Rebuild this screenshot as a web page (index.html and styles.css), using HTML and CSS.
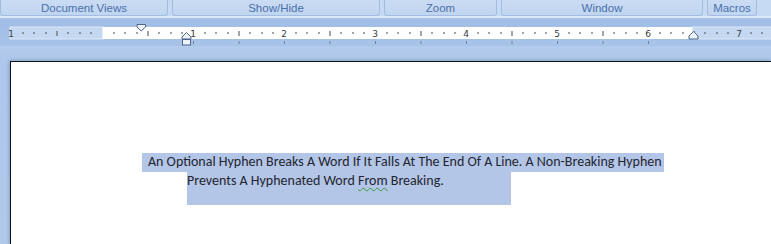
FILE: index.html
```html
<!DOCTYPE html>
<html lang="en">

<head>
    <meta charset="UTF-8">
    <title>Document - Hyphens</title>
    <link rel="stylesheet" href="styles.css">
</head>

<body>
    <div class="ribbon">
        <div class="group g-views">Document Views</div>
        <div class="group g-show">Show/Hide</div>
        <div class="group g-zoom">Zoom</div>
        <div class="group g-window">Window</div>
        <div class="group g-macros">Macros</div>
    </div>

    <!-- ruler: zero at x=102.5, one inch = 91px -->
    <div class="ruler-bar">
        <svg class="ruler" width="771" height="26" viewBox="0 0 771 26">
            <defs>
                <pattern id="ticks" patternUnits="userSpaceOnUse" x="102.5" y="0" width="91" height="26">
                    <rect x="11" y="12" width="1" height="2" fill="#4a4a4a" />
                    <rect x="22" y="12" width="1" height="2" fill="#4a4a4a" />
                    <rect x="34" y="12" width="1" height="2" fill="#4a4a4a" />
                    <rect x="45" y="11" width="1" height="5" fill="#4a4a4a" />
                    <rect x="56" y="12" width="1" height="2" fill="#4a4a4a" />
                    <rect x="68" y="12" width="1" height="2" fill="#4a4a4a" />
                    <rect x="79" y="12" width="1" height="2" fill="#4a4a4a" />
                </pattern>
                <pattern id="tabs" patternUnits="userSpaceOnUse" x="102" y="0" width="45.5" height="26">
                    <rect x="0" y="21" width="1" height="3" fill="#6f7f98" />
                </pattern>
            </defs>

            <rect class="strip-off" x="10" y="7" width="93" height="12" />
            <rect class="strip-on" x="102.5" y="7" width="590" height="12" />
            <rect class="strip-off" x="692.5" y="7" width="80" height="12" />

            <rect x="12" y="0" width="759" height="26" fill="url(#ticks)" />
            <rect x="190" y="0" width="462" height="26" fill="url(#tabs)" />

            <g class="nums">
                <text x="11" y="16.5">1</text>
                <text x="193" y="16.5">1</text>
                <text x="284" y="16.5">2</text>
                <text x="375" y="16.5">3</text>
                <text x="466" y="16.5">4</text>
                <text x="557" y="16.5">5</text>
                <text x="648" y="16.5">6</text>
                <text x="739" y="16.5">7</text>
            </g>

            <g class="marker">
                <path d="M137 4.5 H145.5 V7 L141.2 11 L137 7 Z" />
                <path d="M186.5 12.5 L191 17 V19 H182 V17 Z" />
                <rect x="182.5" y="19.5" width="8" height="5.5" />
                <path d="M693.5 11.5 L698 16 V19 H689 V16 Z" />
            </g>
        </svg>
    </div>

    <div class="workspace">
        <div class="page">
            <p class="para">
                <span class="line first">An Optional Hyphen Breaks A Word If It Falls At The End Of A Line. A Non-Breaking Hyphen</span>
                <span class="line second">Prevents A Hyphenated Word <span class="grammar">From</span> Breaking.</span>
            </p>
        </div>
    </div>
</body>

</html>
```

FILE: styles.css
```css
body {
    margin: 0;
    width: 771px;
    height: 244px;
    overflow: hidden;
    background-color: #b1c9eb;
    font-family: 'Liberation Sans', Arial, sans-serif;
}

/* 功能区分组标题 */
.ribbon {
    display: flex;
    gap: 4px;
    height: 16px;
    background-color: #c6daf3;
    border-bottom: 2px solid #dce8f7;
}

.group {
    box-sizing: border-box;
    height: 16px;
    border: 1px solid #a3bde2;
    border-top: none;
    border-radius: 0 0 3px 3px;
    background: linear-gradient(#cadcf3, #c0d5f0);
    color: #4a70ab;
    font-size: 11.5px;
    line-height: 17px;
    text-align: center;
}

.g-views { width: 168px; }
.g-show { width: 208px; }
.g-zoom { width: 113px; }
.g-window { width: 202px; }
.g-macros { width: 50px; }

/* 标尺 */
.ruler-bar {
    height: 26px;
    background: linear-gradient(#a0bde6, #a7c3e9);
    border-top: 2px solid #a6c1e7;
}

.ruler {
    display: block;
}

.strip-on {
    fill: #ffffff;
}

.strip-off {
    fill: #c5d8f1;
    stroke: #dde8f7;
    stroke-width: 1;
}

.nums text {
    font-family: 'DejaVu Sans', sans-serif;
    font-size: 9px;
    fill: #3c3c3c;
    text-anchor: middle;
}

.marker path,
.marker rect {
    fill: #eef3fa;
    stroke: #4d6588;
    stroke-width: 1;
}

/* 文档区域 */
.workspace {
    box-sizing: border-box;
    height: 198px;
    padding: 15px 0 0 10px;
    background: linear-gradient(#b3cbec, #adc6ea 20px, #b1c9eb);
}

.page {
    height: 100%;
    background: white;
    border-top: 1px solid #111;
    border-left: 1px solid #111;
    box-shadow: -1px -1px 3px rgba(60, 90, 140, 0.35);
}

.para {
    margin: 0;
    padding-top: 91px;
    font-family: 'Carlito', 'Liberation Sans', sans-serif;
    font-size: 14px;
    color: #25252f;
}

.line {
    display: block;
    line-height: 18px;
    background-color: #b3c6e7;
}

.first {
    width: 516px;
    height: 19px;
    margin-left: 131px;
    padding-left: 6px;
    white-space: nowrap;
}

.second {
    width: 324px;
    height: 33px;
    margin-left: 176px;
    white-space: nowrap;
}

.grammar {
    text-decoration: underline wavy #3a9a3a;
    text-decoration-thickness: 1px;
    text-underline-offset: 2px;
}
```
